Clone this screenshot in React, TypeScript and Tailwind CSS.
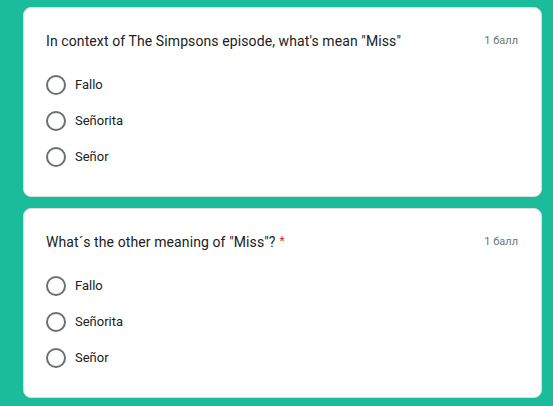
import React from 'react';

const options = ['Fallo', 'Señorita', 'Señor'];

function Radio({ label }: { label: string }) {
  return (
    <div className="flex items-center h-[36px]">
      <span className="w-[20px] h-[20px] rounded-full border-2 border-[#6b6f73] box-border" />
      <span className="ml-[9px] text-[13px] text-[#202124]">{label}</span>
    </div>
  );
}

function QuestionCard({ title, required }: { title: string; required?: boolean }) {
  return (
    <div className="bg-white rounded-[8px] border border-[#dadce0] pl-[22px] pr-[23px] pt-[23px] pb-[21px]">
      <div className="flex items-center justify-between h-[20px]">
        <span className="text-[14px] text-[#202124] tracking-[0.1px]">
          {title}
          {required && <span className="text-[#d93025] text-[12px] ml-[4px] align-top">*</span>}
        </span>
        <span className="text-[11px] text-[#70757a]">1 балл</span>
      </div>
      <div className="mt-[16px] flex flex-col">
        {options.map((o) => (
          <Radio key={o} label={o} />
        ))}
      </div>
    </div>
  );
}

export default function App() {
  return (
    <div
      className="w-[553px] h-[406px] bg-[#1abc9c] pl-[23px] pr-[11px] pt-[7px] flex flex-col gap-[11px] overflow-hidden"
      style={{ fontFamily: 'Roboto, "Noto Sans", sans-serif' }}
    >
      <QuestionCard title={'In context of The Simpsons episode, what\'s mean "Miss"'} />
      <QuestionCard title={'What´s the other meaning of "Miss"?'} required />
    </div>
  );
}
